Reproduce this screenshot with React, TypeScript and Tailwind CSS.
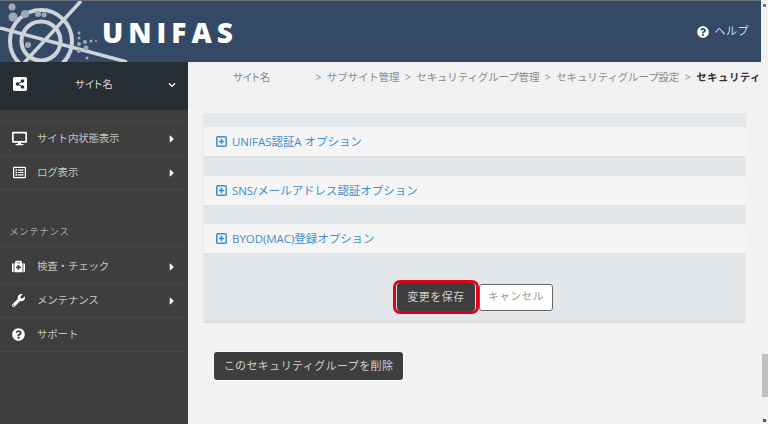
import React from "react";
import { FaShareAltSquare, FaChevronDown, FaCaretRight, FaQuestionCircle, FaDesktop, FaMedkit, FaWrench, FaRegListAlt } from "react-icons/fa";

const font = { fontFamily: '"Open Sans","Noto Sans CJK JP",sans-serif' };

function Logo() {
  return (
    <svg width="130" height="61" viewBox="0 0 130 61" className="absolute left-0 top-0">
      <g fill="none" stroke="#cfd4da">
        <circle cx="41" cy="40" r="31" strokeWidth="4" />
        <circle cx="41" cy="40" r="19.5" strokeWidth="4" />
        <line x1="81" y1="0" x2="24" y2="62" strokeWidth="3.5" />
        <line x1="0" y1="27" x2="127" y2="61" strokeWidth="3.5" />
      </g>
      <g fill="#9fa9b6">
        <circle cx="12" cy="6" r="3.5" />
        <circle cx="13" cy="16" r="4.5" />
        <circle cx="25" cy="13" r="4" />
        <circle cx="38" cy="13" r="3" />
        <circle cx="44" cy="14" r="2.5" />
        <circle cx="28" cy="44" r="3" />
        <circle cx="79" cy="32" r="1.5" />
        <circle cx="79" cy="37" r="1.5" />
        <circle cx="79" cy="43" r="2" />
        <circle cx="85" cy="41" r="2" />
        <circle cx="91" cy="40" r="1.5" />
        <circle cx="96" cy="40" r="1" />
        <circle cx="86" cy="47" r="2.5" />
        <circle cx="79" cy="50" r="2" />
        <circle cx="87" cy="57" r="1.5" />
      </g>
    </svg>
  );
}

function NavItem({ icon, label, arrow = true }: { icon: React.ReactNode; label: string; arrow?: boolean }) {
  return (
    <div className="flex h-[34px] items-center border-b border-[#484848] pl-[12px] pr-[10px]">
      <span className="flex w-[25px] justify-start text-white">{icon}</span>
      <span className="flex-1 text-[10.5px] tracking-[-0.2px] text-[#c4c4c4]">{label}</span>
      {arrow && <FaCaretRight className="text-[12px] text-white" />}
    </div>
  );
}

function PlusBox() {
  return (
    <svg width="11" height="11" viewBox="0 0 11 11" className="shrink-0">
      <rect x="0.75" y="0.75" width="9.5" height="9.5" rx="1" fill="none" stroke="#3e8ecf" strokeWidth="1.5" />
      <path d="M5.5 2.8V8.2M2.8 5.5H8.2" stroke="#3e8ecf" strokeWidth="1.5" />
    </svg>
  );
}

function Card({ label }: { label: string }) {
  return (
    <div className="ml-px flex h-[31px] items-center rounded-[2px] border-b-2 border-[#dfe2e4] bg-[#f5f5f5] pl-[12px]">
      <PlusBox />
      <span className="ml-[5px] text-[11.5px] tracking-[-0.05px] text-[#3e8ecf]">{label}</span>
    </div>
  );
}

export default function App() {
  return (
    <div style={font} className="flex h-[424px] w-[768px] overflow-hidden bg-[#f2f2f2]">
      <div className="flex min-w-0 flex-1 flex-col">
        <header className="relative flex h-[62px] shrink-0 items-center justify-between border-t border-[#6b6f74] bg-[#344966] pr-[12px]">
          <Logo />
          <span className="ml-[102px] text-[28px] font-extrabold leading-none tracking-[5px] text-white">UNIFAS</span>
          <span className="flex items-center gap-[6px] text-[11px] tracking-[0.5px] text-[#d5dae0]">
            <FaQuestionCircle className="text-[12px] text-white" />
            ヘルプ
          </span>
        </header>
        <div className="flex min-h-0 flex-1">
          <aside className="flex w-[188px] shrink-0 flex-col bg-[#3e3e3e]">
            <div className="flex h-[48px] shrink-0 items-start bg-[#262d33] pl-[12px] pr-[12px] pt-[14px]">
              <FaShareAltSquare className="text-[16px] text-white" />
              <span className="ml-[47px] flex-1 text-[10.5px] leading-[16px] text-[#d8d8d8] [font-feature-settings:'palt']">サイト名</span>
              <FaChevronDown className="mt-[5px] text-[8px] text-white" />
            </div>
            <div className="mt-[11px] border-t border-[#484848]">
              <NavItem icon={<FaDesktop className="text-[15px]" />} label="サイト内状態表示" />
              <NavItem icon={<FaRegListAlt className="ml-px text-[13px]" />} label="ログ表示" />
            </div>
            <div className="mt-[35px] border-b border-[#484848] pb-[7px] pl-[9px] text-[9.5px] leading-[14px] tracking-[0.6px] text-[#aaaaaa]">メンテナンス</div>
            <div className="h-[3px]" />
            <NavItem icon={<FaMedkit className="text-[13px]" />} label="検査・チェック" />
            <NavItem icon={<FaWrench className="text-[13px]" />} label="メンテナンス" />
            <NavItem icon={<FaQuestionCircle className="text-[13px]" />} label="サポート" arrow={false} />
          </aside>
          <main className="min-w-0 flex-1 overflow-hidden">
            <div className="flex h-[32px] items-center whitespace-nowrap pl-[45px] text-[10.5px] tracking-[-0.15px] text-[#8a8a8a] [word-spacing:3px]">
              <span className="w-[84px] [font-feature-settings:'palt']">サイト名</span>
              <span>&gt; サブサイト管理 &gt; セキュリティグループ管理 &gt; セキュリティグループ設定 &gt;&nbsp;</span>
              <span className="font-bold tracking-[0.4px] text-[#333333]">セキュリティ</span>
            </div>
            <section className="mx-[15px] mt-[19px] h-[210px] rounded-[2px] border-b-2 border-[#dcdfe1] bg-[#e4e8eb] pt-[14px]">
              <Card label="UNIFAS認証A オプション" />
              <div className="h-[18px]" />
              <Card label="SNS/メールアドレス認証オプション" />
              <div className="h-[17px]" />
              <Card label="BYOD(MAC)登録オプション" />
              <div className="mt-[25px] flex items-center justify-center pr-[3px]">
                <button className="rounded-[7px] border-[3px] border-[#e0001b] px-px">
                  <span className="flex h-[28px] w-[78px] items-center justify-center rounded-[3px] bg-[#3e3e3e] text-[11px] tracking-[0.5px] text-[#d0d0d0]">変更を保存</span>
                </button>
                <button className="flex h-[27px] w-[74px] items-center justify-center rounded-[3px] border border-[#666666] bg-white text-[10.5px] tracking-[0.7px] text-[#999999]">キャンセル</button>
              </div>
            </section>
            <button className="ml-[26px] mt-[29px] flex h-[28px] w-[189px] items-center justify-center rounded-[3px] bg-[#3e3e3e] text-[11px] tracking-[0.4px] text-[#d0d0d0] shadow-[0_0_0_1px_#ffffff]">このセキュリティグループを削除</button>
          </main>
        </div>
      </div>
      <div className="flex w-[7px] shrink-0 flex-col items-center bg-[#f1f1f1]">
        <div className="mt-[4px] h-[3px] w-[3px] bg-[#777777]" />
        <div className="ml-px mt-auto h-[43px] w-[6px] bg-[#c0c0c0]" />
        <div className="mb-[2px] mt-[22px] h-[3px] w-[3px] bg-[#555555]" />
      </div>
    </div>
  );
}
